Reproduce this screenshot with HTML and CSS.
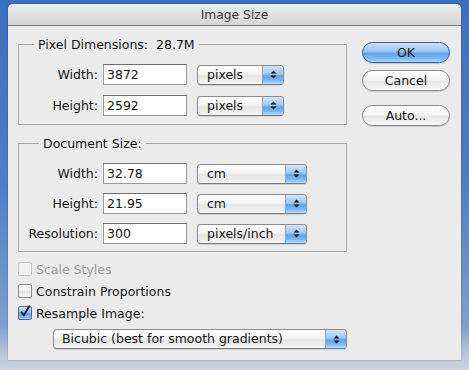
FILE: index.html
```html
<!DOCTYPE html>
<html>
<head>
<meta charset="utf-8">
<link rel="stylesheet" href="styles.css">
</head>
<body>
<div class="dialog">
  <div class="titlebar">Image Size</div>
  <div class="content">
    <div class="main">
      <fieldset class="group g1">
        <legend class="legend l1">Pixel Dimensions:&nbsp; 28.7M</legend>
        <div class="row">
          <span class="lbl">Width:</span>
          <span class="field">3872</span>
          <span class="popup p87"><span class="ptext">pixels</span><span class="arrows"><svg width="7" height="9" viewBox="0 0 7 9"><path d="M3.5 0.5 L6.5 3.5 L0.5 3.5 Z M0.5 5.5 L6.5 5.5 L3.5 8.5 Z" fill="#111"/></svg></span></span>
        </div>
        <div class="row r31">
          <span class="lbl">Height:</span>
          <span class="field">2592</span>
          <span class="popup p87"><span class="ptext">pixels</span><span class="arrows"><svg width="7" height="9" viewBox="0 0 7 9"><path d="M3.5 0.5 L6.5 3.5 L0.5 3.5 Z M0.5 5.5 L6.5 5.5 L3.5 8.5 Z" fill="#111"/></svg></span></span>
        </div>
      </fieldset>
      <fieldset class="group g2">
        <legend class="legend l2">Document Size:</legend>
        <div class="row">
          <span class="lbl">Width:</span>
          <span class="field">32.78</span>
          <span class="popup p110"><span class="ptext">cm</span><span class="arrows"><svg width="7" height="9" viewBox="0 0 7 9"><path d="M3.5 0.5 L6.5 3.5 L0.5 3.5 Z M0.5 5.5 L6.5 5.5 L3.5 8.5 Z" fill="#111"/></svg></span></span>
        </div>
        <div class="row r30">
          <span class="lbl">Height:</span>
          <span class="field">21.95</span>
          <span class="popup p110"><span class="ptext">cm</span><span class="arrows"><svg width="7" height="9" viewBox="0 0 7 9"><path d="M3.5 0.5 L6.5 3.5 L0.5 3.5 Z M0.5 5.5 L6.5 5.5 L3.5 8.5 Z" fill="#111"/></svg></span></span>
        </div>
        <div class="row r30">
          <span class="lbl">Resolution:</span>
          <span class="field">300</span>
          <span class="popup p110"><span class="ptext">pixels/inch</span><span class="arrows"><svg width="7" height="9" viewBox="0 0 7 9"><path d="M3.5 0.5 L6.5 3.5 L0.5 3.5 Z M0.5 5.5 L6.5 5.5 L3.5 8.5 Z" fill="#111"/></svg></span></span>
        </div>
      </fieldset>
      <div class="checks">
        <div class="check disabled"><span class="box"></span><span>Scale Styles</span></div>
        <div class="check"><span class="box"></span><span>Constrain Proportions</span></div>
        <div class="check"><span class="box on"><svg width="14" height="14" viewBox="0 0 14 14"><path d="M3 7.2 L5.6 11 L11.8 0.5" fill="none" stroke="#0d1a33" stroke-width="2.2" stroke-linecap="round" stroke-linejoin="round"/></svg></span><span>Resample Image:</span></div>
      </div>
      <span class="popup bicubic"><span class="ptext">Bicubic (best for smooth gradients)</span><span class="arrows"><svg width="7" height="9" viewBox="0 0 7 9"><path d="M3.5 0.5 L6.5 3.5 L0.5 3.5 Z M0.5 5.5 L6.5 5.5 L3.5 8.5 Z" fill="#111"/></svg></span></span>
    </div>
    <div class="buttons">
      <div class="btn default">OK</div>
      <div class="btn">Cancel</div>
      <div class="btn auto">Auto...</div>
    </div>
  </div>
</div>
</body>
</html>
```

FILE: styles.css
```css
html, body {
  margin: 0;
  padding: 0;
}
body {
  width: 469px;
  height: 370px;
  overflow: hidden;
  background: linear-gradient(to bottom, #3c6fbf 0%, #4d7fc6 50%, #7f9fcb 88%, #b9c8da 96%, #c7d3e0 100%);
  font-family: "DejaVu Sans", "Liberation Sans", sans-serif;
  font-size: 12.5px;
  color: #161616;
}
.dialog {
  margin: 4px 0 0 8px;
  width: 453px;
  height: 356px;
  background: #ebebeb;
  border-radius: 5px 5px 0 0;
  box-shadow: 0 0 2px rgba(0,0,0,0.35);
  display: flex;
  flex-direction: column;
}
.titlebar {
  height: 21px;
  border-bottom: 1px solid #7b7b7b;
  border-radius: 5px 5px 0 0;
  background: linear-gradient(to bottom, #ececec, #d6d6d6);
  text-align: center;
  line-height: 23px;
  font-size: 12.3px;
  color: #3a3a3a;
}
.content {
  display: flex;
  padding: 0 0 0 10px;
}
.main {
  width: 329px;
  display: flex;
  flex-direction: column;
}
.group {
  margin: 0;
  border: 1px solid #a8a8a8;
  padding: 0 0 8px 0;
  min-width: 0;
}
.g1 {
  margin-top: 11px;
  padding-top: 12px;
}
.g2 {
  margin-top: 11px;
  padding-top: 12px;
  padding-bottom: 7px;
}
.legend {
  padding: 0 4px;
  line-height: 15px;
  height: 15px;
}
.l1 { margin-left: 15px; }
.l2 { margin-left: 20px; }
.row {
  display: flex;
  align-items: center;
  height: 21px;
}
.r31 { margin-top: 10px; }
.r30 { margin-top: 9px; }
.lbl {
  width: 79px;
  text-align: right;
}
.field {
  margin-left: 5px;
  width: 84px;
  height: 21px;
  box-sizing: border-box;
  background: #fff;
  border: 1px solid #9a9a9a;
  border-top-color: #6f6f6f;
  padding-left: 3px;
  line-height: 19px;
}
.popup {
  display: flex;
  align-items: stretch;
  height: 20px;
  box-sizing: border-box;
  border: 1px solid #8c8c8c;
  border-bottom-color: #7a7a7a;
  border-radius: 4px;
  overflow: hidden;
  background: linear-gradient(to bottom, #fefefe 0%, #f3f3f3 45%, #e4e4e4 55%, #eeeeee 85%, #f8f8f8 100%);
  box-shadow: 0 1px 1px rgba(0,0,0,0.12);
}
.row .popup { margin-left: 10px; }
.p87 { width: 87px; }
.p110 { width: 110px; }
.ptext {
  flex: 1;
  padding-left: 9px;
  line-height: 18px;
  white-space: nowrap;
  overflow: hidden;
}
.arrows {
  width: 20px;
  display: flex;
  align-items: center;
  justify-content: center;
  border-left: 1px solid #8aa4c4;
  background: linear-gradient(to bottom, #d2e6fa 0%, #9ac6f2 45%, #5fa5ec 55%, #79b8f2 80%, #b5dcfd 100%);
}
.checks {
  margin-top: 6px;
  display: flex;
  flex-direction: column;
}
.check {
  height: 22px;
  display: flex;
  align-items: center;
  gap: 4px;
}
.box {
  width: 14px;
  height: 14px;
  box-sizing: border-box;
  border: 1px solid #8d8d8d;
  border-radius: 2px;
  background: linear-gradient(to bottom, #fdfdfd, #ececec 50%, #e2e2e2 51%, #f6f6f6);
  display: flex;
}
.box.on {
  border-color: #4d6b98;
  background: linear-gradient(to bottom, #cfe4f9 0%, #93c2f0 45%, #5da2e9 55%, #9fd0fb 100%);
  overflow: visible;
}
.box.on svg {
  margin: -2px 0 0 0;
}
.check.disabled {
  color: #9c9c9c;
}
.check.disabled .box {
  border-color: #c6c6c6;
  background: #f1f1f1;
}
.bicubic {
  margin-top: 5px;
  margin-left: 35px;
  width: 294px;
}
.bicubic .ptext {
  padding-left: 8px;
}
.buttons {
  margin-left: 15px;
  padding-top: 16px;
  display: flex;
  flex-direction: column;
  width: 88px;
}
.btn {
  height: 21px;
  box-sizing: border-box;
  border: 1px solid #8a8a8a;
  border-radius: 11px;
  background: linear-gradient(to bottom, #ffffff 0%, #f4f4f4 45%, #e6e6e6 55%, #f2f2f2 85%, #fbfbfb 100%);
  text-align: center;
  line-height: 19px;
  box-shadow: 0 1px 1px rgba(0,0,0,0.15);
  margin-bottom: 7px;
}
.btn.default {
  border-color: #3c5c94;
  background: linear-gradient(to bottom, #cde3f8 0%, #95c3ef 45%, #5fa3e8 55%, #78b7f0 80%, #b0dafd 100%);
}
.btn.auto {
  margin-top: 7px;
}
```
